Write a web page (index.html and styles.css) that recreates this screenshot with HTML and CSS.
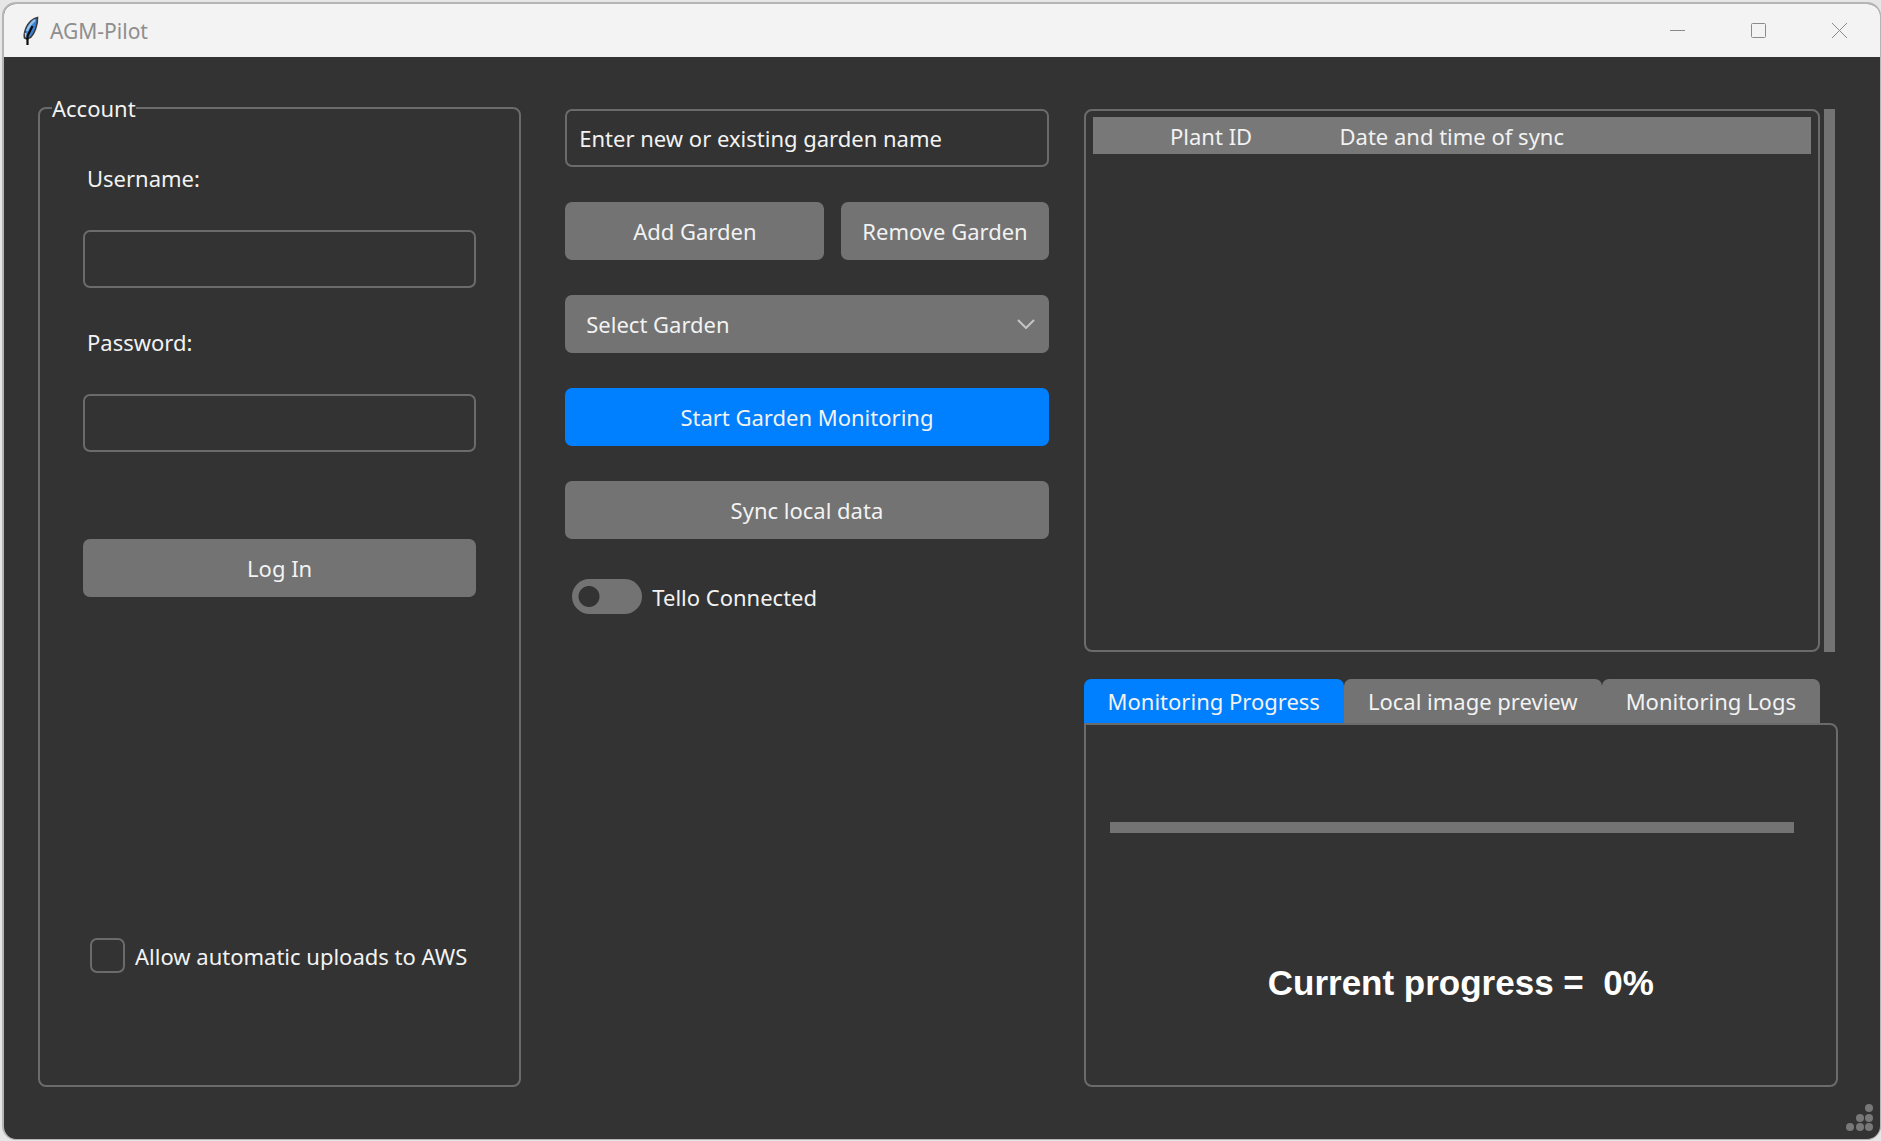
FILE: index.html
```html
<!DOCTYPE html>
<html lang="en">
<head>
<meta charset="utf-8">
<title>AGM-Pilot</title>
<link rel="stylesheet" href="styles.css">
</head>
<body>
<div class="window">
  <header class="titlebar">
    <svg class="feather" viewBox="0 0 18 30" aria-hidden="true">
      <path d="M15.500 1.500C11 2 6 7 4 12C2.500 16 1.500 19 2.500 22L5 23L9 21C12 18 16 9 15.500 1.500Z" fill="#3c82d6" stroke="#3a3a3a" stroke-width="1.600"/>
      <path d="M13 4C10 6 6 11 5 15" fill="none" stroke="#8fc0ee" stroke-width="2.400"/>
      <path d="M3.500 17L4 21" fill="none" stroke="#b9c4cc" stroke-width="1.600"/>
      <path d="M10.500 10L7.500 16L5.500 20V29" fill="none" stroke="#0c0c0c" stroke-width="2.200"/>
    </svg>
    <h1 class="title">AGM-Pilot</h1>
    <div class="controls">
      <button class="control" aria-label="Minimize"><svg viewBox="0 0 15 15"><path d="M0 7.500H15"/></svg></button>
      <button class="control" aria-label="Maximize"><svg viewBox="0 0 15 15"><rect x="0.500" y="0.500" width="14" height="14" rx="1"/></svg></button>
      <button class="control" aria-label="Close"><svg viewBox="0 0 15 15"><path d="M0 0L15 15M15 0L0 15"/></svg></button>
    </div>
  </header>
  <main class="content">
    <fieldset class="account">
      <legend>Account</legend>
      <label class="field-label" for="username">Username:</label>
      <input class="entry" id="username" type="text">
      <label class="field-label" for="password">Password:</label>
      <input class="entry" id="password" type="password">
      <button class="button login">Log In</button>
      <label class="check"><input type="checkbox" class="check-box">Allow automatic uploads to AWS</label>
    </fieldset>
    <section class="garden">
      <input class="entry" type="text" aria-label="Garden name" value="Enter new or existing garden name">
      <div class="button-row">
        <button class="button add">Add Garden</button>
        <button class="button remove">Remove Garden</button>
      </div>
      <div class="select-wrap">
        <select class="select" aria-label="Garden"><option>Select Garden</option></select>
        <svg class="chevron" viewBox="0 0 18 10" aria-hidden="true"><path d="M1 1L9 9L17 1"/></svg>
      </div>
      <button class="button primary">Start Garden Monitoring</button>
      <button class="button">Sync local data</button>
      <label class="check"><input type="checkbox" role="switch" class="switch">Tello Connected</label>
    </section>
    <section class="results">
      <div class="tree">
        <div class="tree-frame">
          <table class="plants">
            <colgroup><col class="col-id"><col class="col-date"><col></colgroup>
            <thead><tr><th>Plant ID</th><th>Date and time of sync</th><td></td></tr></thead>
          </table>
        </div>
        <div class="scrollbar"></div>
      </div>
      <div class="notebook">
        <div class="tabs" role="tablist">
          <button class="tab active" role="tab" aria-selected="true">Monitoring Progress</button>
          <button class="tab" role="tab" aria-selected="false">Local image preview</button>
          <button class="tab" role="tab" aria-selected="false">Monitoring Logs</button>
        </div>
        <div class="pane" role="tabpanel">
          <progress class="bar" value="0" max="100" aria-label="Monitoring progress"></progress>
          <p class="status">Current progress =&nbsp; 0%</p>
        </div>
      </div>
    </section>
  </main>
  <svg class="grip" viewBox="0 0 28 28" aria-hidden="true">
    <circle cx="23" cy="4" r="4"/><circle cx="14" cy="14" r="4"/><circle cx="23" cy="14" r="4"/>
    <circle cx="4" cy="23" r="4"/><circle cx="14" cy="23" r="4"/><circle cx="23" cy="23" r="4"/>
  </svg>
</div>
</body>
</html>
```
FILE: styles.css
```css
* { box-sizing: border-box; }

body {
  margin: 0;
  min-height: 100vh;
  padding: 2px 0 1px 2px;
  display: flex;
  background: #e6e6e6;
  color: #f2f2f2;
  font: 22px/28px "Noto Sans", "Open Sans", sans-serif;
}

button, input, select { font: inherit; color: inherit; margin: 0; }

.window {
  position: relative;
  flex: 1;
  display: flex;
  flex-direction: column;
  border: 2px solid #b5b5b5;
  border-width: 2px 1px 1px 2px;
  border-radius: 14px;
  background: #333;
  overflow: hidden;
}

.titlebar {
  display: flex;
  align-items: center;
  height: 53px;
  padding-left: 18px;
  background: #f3f3f3;
  color: #8e8e8e;
}

.feather { width: 18px; height: 30px; }

.title { margin: 0 0 0 10px; font-size: 21px; font-weight: 400; }

.controls { display: flex; height: 100%; margin-left: auto; }

.control {
  display: flex;
  align-items: center;
  justify-content: center;
  width: 81px;
  padding: 0;
  border: 0;
  background: none;
}

.control svg { width: 15px; height: 15px; fill: none; stroke: #8a8a8a; }

.content {
  flex: 1;
  display: grid;
  grid-template-columns: 492fr 483fr 754fr;
  column-gap: 35px;
  padding: 52px 42px 52px 34px;
}

.account {
  display: flex;
  flex-direction: column;
  min-width: 0;
  margin: -15px 9px 0 0;
  padding: 42px 43px 112px;
  border: 2px solid #6b6b6b;
  border-radius: 8px;
}

.account legend { margin-left: -31px; padding: 0; }

.field-label { margin: 0 4px 38px; }

.entry {
  width: 100%;
  height: 58px;
  padding: 0 12px;
  border: 2px solid #6b6b6b;
  border-radius: 7px;
  background: #333;
}

.entry + .field-label { margin-top: 40px; }

.button {
  width: 100%;
  height: 58px;
  padding: 0 16px;
  border: 0;
  border-radius: 7px;
  background: #737373;
}

.login { margin-top: 87px; }

.primary { background: #007fff; }

.check {
  display: flex;
  align-items: center;
  gap: 10px;
  padding: 0 7px;
  white-space: nowrap;
}

.account .check { margin-top: auto; }

.check-box, .switch { appearance: none; flex: none; height: 35px; }

.check-box {
  width: 35px;
  border: 2px solid #6b6b6b;
  border-radius: 7px;
}

.switch {
  width: 70px;
  border-radius: 18px;
  background: radial-gradient(circle at 17px 50%, #333 10px, #737373 11px);
}

.garden { display: flex; flex-direction: column; gap: 35px; }

.garden .check { margin-top: 5px; }

.button-row { display: grid; grid-template-columns: 259fr 207fr; gap: 17px; }

.select-wrap { position: relative; }

.select {
  appearance: none;
  display: block;
  width: 100%;
  height: 58px;
  padding: 0 21px;
  border: 0;
  border-radius: 7px;
  background: #737373;
}

.chevron {
  position: absolute;
  right: 14px;
  top: 24px;
  width: 18px;
  height: 10px;
  fill: none;
  stroke: #c4c4c4;
  stroke-width: 2;
  pointer-events: none;
}

.results { display: grid; grid-template-rows: 4fr 3fr; gap: 27px; }

.tree { display: flex; gap: 4px; padding-right: 3px; }

.tree-frame {
  flex: 1;
  padding: 6px 7px;
  border: 2px solid #6b6b6b;
  border-radius: 8px;
}

.scrollbar { width: 11px; background: #737373; }

.plants {
  width: 100%;
  table-layout: fixed;
  border-collapse: collapse;
  background: #787878;
}

.plants th, .plants td { height: 37px; padding: 0; font-weight: 400; }

.col-id { width: 33%; }
.col-date { width: 34%; }

.notebook { display: flex; flex-direction: column; }

.tabs { display: flex; padding-right: 18px; }

.tab {
  flex: auto;
  height: 44px;
  padding: 0;
  border: 0;
  border-radius: 7px 7px 0 0;
  background: #737373;
}

.tab.active { background: #007fff; }

.pane {
  flex: 1;
  padding: 97px 42px 0 24px;
  border: 2px solid #6b6b6b;
  border-radius: 0 8px 8px 8px;
}

.bar {
  appearance: none;
  display: block;
  width: 100%;
  height: 11px;
  border: 0;
  background: #737373;
}

.bar::-webkit-progress-bar { background: #737373; }
.bar::-webkit-progress-value { background: #007fff; }

.status {
  margin: 130px -18px 0 0;
  color: #fff;
  font: bold 35px/40px "Liberation Sans", Arial, sans-serif;
  text-align: center;
}

.grip {
  position: absolute;
  right: 6px;
  bottom: 7px;
  width: 28px;
  height: 28px;
  fill: #787878;
}
```
